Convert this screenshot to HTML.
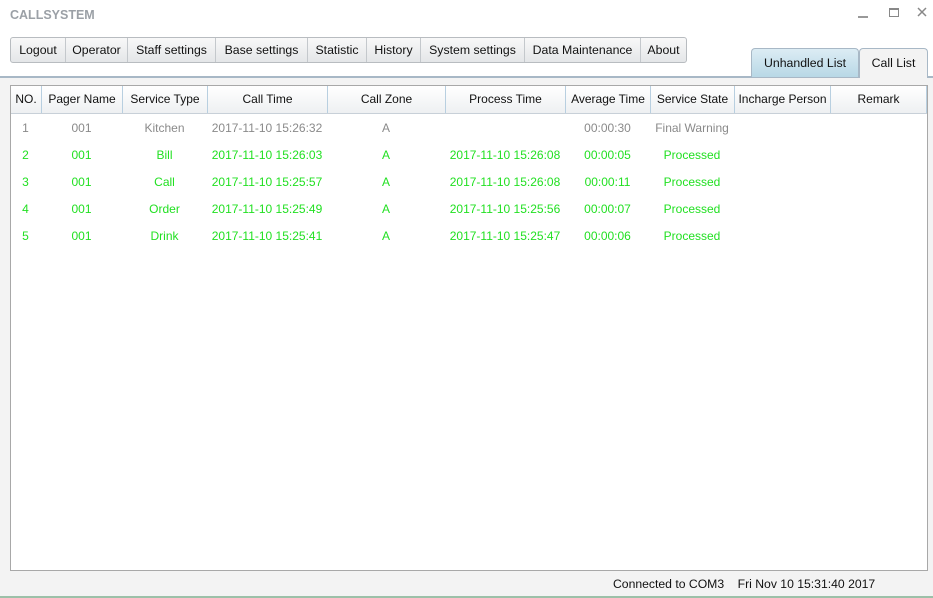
<!DOCTYPE html>
<html><head><style>
*{margin:0;padding:0;box-sizing:border-box}
body{width:933px;height:598px;position:relative;background:#f3f3f3;font-family:"Liberation Sans",sans-serif;font-size:12px;overflow:hidden}
.top{position:absolute;left:0;top:0;width:933px;height:76px;background:#fff}
.title{position:absolute;left:10px;top:8px;font-weight:bold;font-size:12.5px;color:#9ba0a6}
.bar{position:absolute;left:10px;top:37px;height:26px;display:flex;border:1px solid #b8bcc0;border-radius:3px;background:linear-gradient(#f8f8f8,#e4e6e8)}
.bar div{text-align:center;line-height:24px;border-right:1px solid #c4c8cc;color:#111;font-size:12.3px;white-space:nowrap}
.bar div:last-child{border-right:none}
.line{position:absolute;left:0;top:76px;width:933px;height:2px;background:#a8b8c6}
.tab{position:absolute;top:48px;height:29px;line-height:28px;text-align:center;border:1px solid #a8b8c6;border-bottom:none;border-radius:4px 4px 0 0;font-size:12.3px;color:#111}
.tbl{position:absolute;left:10px;top:85px;width:918px;height:486px;background:#fff;border:1px solid #a8a8a8}
.hdr{position:absolute;left:0;top:0;height:28px;width:916px;background:linear-gradient(#fff,#eef0f2);border-bottom:1px solid #c8d0d8}
.c{position:absolute;text-align:center;white-space:nowrap;overflow:hidden}
.hdr .c{top:0;height:27px;line-height:27px;border-right:1px solid #b8cfe0;color:#111;font-size:12px}
.row .c{height:27px;line-height:27px;font-size:12px}
.status{position:absolute;top:577px;left:613px;font-size:12.2px;color:#111}
.bot{position:absolute;left:0;top:596px;width:933px;height:2px;background:#9cc0a8}
</style></head><body>
<div class="top"></div>
<div class="title">CALLSYSTEM</div>
<div style="position:absolute;left:858px;top:16px;width:10px;height:2px;background:#999"></div>
<div style="position:absolute;left:889px;top:8px;width:10px;height:9px;border:1px solid #888;border-top-width:2px"></div>
<svg style="position:absolute;left:917px;top:7px" width="10" height="10"><path d="M1 1L9 9M9 1L1 9" stroke="#888" stroke-width="1.5"/></svg>
<div class="bar"><div style="width:55px">Logout</div><div style="width:62px">Operator</div><div style="width:88px">Staff settings</div><div style="width:92px">Base settings</div><div style="width:59px">Statistic</div><div style="width:54px">History</div><div style="width:104px">System settings</div><div style="width:116px">Data Maintenance</div><div style="width:45px">About</div></div>
<div class="line"></div>
<div class="tab" style="left:751px;width:108px;background:linear-gradient(#dcecf4,#b8d8e6)">Unhandled List</div>
<div class="tab" style="left:859px;width:69px;background:#f3f3f3;height:30px">Call List</div>
<div class="tbl">
<div class="hdr">
<div class="c" style="left:0;width:31px">NO.</div>
<div class="c" style="left:31px;width:81px">Pager Name</div>
<div class="c" style="left:112px;width:85px">Service Type</div>
<div class="c" style="left:197px;width:120px">Call Time</div>
<div class="c" style="left:317px;width:118px">Call Zone</div>
<div class="c" style="left:435px;width:120px">Process Time</div>
<div class="c" style="left:555px;width:85px">Average Time</div>
<div class="c" style="left:640px;width:84px">Service State</div>
<div class="c" style="left:724px;width:96px">Incharge Person</div>
<div class="c" style="left:820px;width:96px">Remark</div>
</div>
</div>
<div class="status">Connected to COM3&nbsp;&nbsp;&nbsp;&nbsp;Fri Nov 10 15:31:40 2017</div>
<div class="bot"></div>
<div class="tbl" style="background:none;border:none;pointer-events:none">
<div class="row" style="position:absolute;top:30px;color:#8a8a8a"><div class="c" style="left:0;width:31px">1</div><div class="c" style="left:31px;width:81px">001</div><div class="c" style="left:112px;width:85px">Kitchen</div><div class="c" style="left:197px;width:120px">2017-11-10 15:26:32</div><div class="c" style="left:317px;width:118px">A</div><div class="c" style="left:555px;width:85px">00:00:30</div><div class="c" style="left:640px;width:84px">Final Warning</div></div>
<div class="row" style="position:absolute;top:57px;color:#22e022"><div class="c" style="left:0;width:31px">2</div><div class="c" style="left:31px;width:81px">001</div><div class="c" style="left:112px;width:85px">Bill</div><div class="c" style="left:197px;width:120px">2017-11-10 15:26:03</div><div class="c" style="left:317px;width:118px">A</div><div class="c" style="left:435px;width:120px">2017-11-10 15:26:08</div><div class="c" style="left:555px;width:85px">00:00:05</div><div class="c" style="left:640px;width:84px">Processed</div></div>
<div class="row" style="position:absolute;top:84px;color:#22e022"><div class="c" style="left:0;width:31px">3</div><div class="c" style="left:31px;width:81px">001</div><div class="c" style="left:112px;width:85px">Call</div><div class="c" style="left:197px;width:120px">2017-11-10 15:25:57</div><div class="c" style="left:317px;width:118px">A</div><div class="c" style="left:435px;width:120px">2017-11-10 15:26:08</div><div class="c" style="left:555px;width:85px">00:00:11</div><div class="c" style="left:640px;width:84px">Processed</div></div>
<div class="row" style="position:absolute;top:111px;color:#22e022"><div class="c" style="left:0;width:31px">4</div><div class="c" style="left:31px;width:81px">001</div><div class="c" style="left:112px;width:85px">Order</div><div class="c" style="left:197px;width:120px">2017-11-10 15:25:49</div><div class="c" style="left:317px;width:118px">A</div><div class="c" style="left:435px;width:120px">2017-11-10 15:25:56</div><div class="c" style="left:555px;width:85px">00:00:07</div><div class="c" style="left:640px;width:84px">Processed</div></div>
<div class="row" style="position:absolute;top:138px;color:#22e022"><div class="c" style="left:0;width:31px">5</div><div class="c" style="left:31px;width:81px">001</div><div class="c" style="left:112px;width:85px">Drink</div><div class="c" style="left:197px;width:120px">2017-11-10 15:25:41</div><div class="c" style="left:317px;width:118px">A</div><div class="c" style="left:435px;width:120px">2017-11-10 15:25:47</div><div class="c" style="left:555px;width:85px">00:00:06</div><div class="c" style="left:640px;width:84px">Processed</div></div>
</div>
</body></html>
